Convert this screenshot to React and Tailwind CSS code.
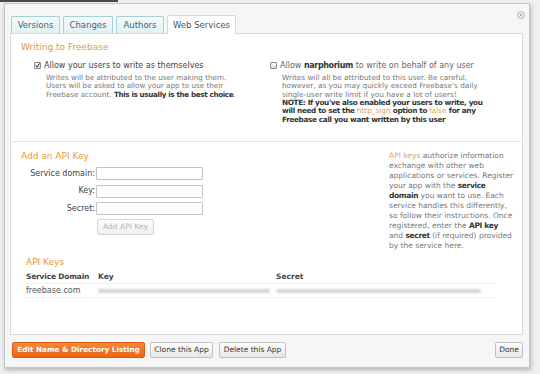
import React from 'react';

const font = { fontFamily: '"DejaVu Sans", Verdana, sans-serif' };

function Checkbox({ checked }) {
  return (
    <span className="w-[7px] h-[7px] border border-[#8a8a8a] bg-gradient-to-b from-white to-[#dcdcdc] rounded-[1px] flex items-center justify-center shrink-0">
      {checked && (
        <svg width="7" height="7" viewBox="0 0 7 7" className="-mt-[1px]">
          <path d="M1 3.5 L3 5.5 L6.5 0.5" fill="none" stroke="#222" strokeWidth="1.4" />
        </svg>
      )}
    </span>
  );
}

function Tab({ label, active, width }) {
  return (
    <div
      className={`flex items-center justify-center text-[8.5px] rounded-t-[2px] border border-b-0 ${
        active
          ? 'bg-white border-[#d6d6d6] text-[#3d5766] relative z-10 h-[19px]'
          : 'h-[18px] bg-gradient-to-b from-[#f4fafb] to-[#e2f0f3] border-[#a9cfd6] text-[#3e6676]'
      }`}
      style={{ width }}
    >
      {label}
    </div>
  );
}

function Field({ label }) {
  return (
    <div className="flex items-center h-[13px]">
      <span className="w-[75px] text-right pr-[1px] text-[8px] text-[#444]">{label}</span>
      <span className="w-[107px] h-[13px] border border-[#c4c4c4] bg-white rounded-[1px]" />
    </div>
  );
}

function Btn({ children, className = '' }) {
  return (
    <button
      className={`h-[16px] rounded-[2px] border border-[#c2c2c2] bg-gradient-to-b from-white to-[#e6e6e6] text-[#333] text-[7.5px] flex items-center justify-center ${className}`}
    >
      {children}
    </button>
  );
}

// bold runs in the small copy, kept narrow like the original
function B({ children }) {
  return <b className="text-[#333] tracking-[-0.35px]">{children}</b>;
}

function Orange({ children }) {
  return <span className="text-[#e3a060]">{children}</span>;
}

function Lines({ lines, className }) {
  return (
    <div className={className}>
      {lines.map((l, i) => (
        <div key={i} className="whitespace-nowrap">{l}</div>
      ))}
    </div>
  );
}

export default function App() {
  return (
    <div className="w-[540px] h-[374px] bg-[#eef0f0] overflow-hidden" style={font}>
      <div className="w-[118px] h-[2px] bg-[#4a4a4a]" />
      <div className="ml-[4px] mt-[1px] w-[526px] h-[365px] bg-[#f6f6f6] border border-[#c6c6c6] shadow-[1px_2px_4px_rgba(0,0,0,0.25)] relative flex flex-col pl-[5px] pr-[6px] pt-[12px]">
        {/* close icon */}
        <svg width="8" height="8" viewBox="0 0 8 8" className="absolute right-[4px] top-[7px]">
          <circle cx="4" cy="4" r="3.4" fill="none" stroke="#a8a8a8" strokeWidth="0.9" />
          <path d="M2.6 2.6 L5.4 5.4 M5.4 2.6 L2.6 5.4" stroke="#a8a8a8" strokeWidth="0.9" />
        </svg>

        {/* Tabs */}
        <div className="flex items-end gap-[3px] pl-[1px] h-[18px]">
          <Tab label="Versions" width={49} />
          <Tab label="Changes" width={50} />
          <Tab label="Authors" width={48} />
          <Tab label="Web Services" width={69} active />
        </div>

        {/* Panel */}
        <div className="-mt-[1px] w-[513px] h-[302px] bg-white border border-[#d9d9d9] flex flex-col">
          {/* Writing to Freebase */}
          <div className="h-[108px] border-b border-[#e2e2e2] mx-[1px] pl-[9px] pt-[7px]">
            <div className="text-[9px] leading-[12px] text-[#e39a3c]">Writing to Freebase</div>
            <div className="flex mt-[7px]">
              <div className="w-[249px] pl-[13px]">
                <div className="flex items-center gap-[3px] h-[11px]">
                  <Checkbox checked />
                  <span className="text-[8px] text-[#444] whitespace-nowrap">Allow your users to write as themselves</span>
                </div>
                <Lines
                  className="mt-[3px] ml-[12px] text-[7.2px] leading-[8.35px] text-[#777]"
                  lines={[
                    'Writes will be attributed to the user making them.',
                    'Users will be asked to allow your app to use their',
                    <>Freebase account. <B>This is usually is the best choice</B>.</>,
                  ]}
                />
              </div>
              <div className="flex-1">
                <div className="flex items-center gap-[3px] h-[11px]">
                  <Checkbox />
                  <span className="text-[8px] text-[#666] whitespace-nowrap">
                    Allow <B>narphorium</B> to write on behalf of any user
                  </span>
                </div>
                <Lines
                  className="mt-[3px] ml-[12px] text-[7.3px] leading-[8.35px] text-[#777]"
                  lines={[
                    'Writes will all be attributed to this user. Be careful,',
                    "however, as you may quickly exceed Freebase's daily",
                    'single-user write limit if you have a lot of users!',
                    <B>NOTE: If you've also enabled your users to write, you</B>,
                    <B>will need to set the <span className="font-normal tracking-normal text-[#e3a060]">http_sign</span> option to <span className="font-normal tracking-normal text-[#e3a060]">false</span> for any</B>,
                    <B>Freebase call you want written by this user</B>,
                  ]}
                />
              </div>
            </div>
          </div>

          {/* Add an API Key */}
          <div className="flex pl-[10px]">
            <div className="flex-1 pt-[8px]">
              <div className="text-[9px] leading-[12px] text-[#e39a3c]">Add an API Key</div>
              <div className="mt-[5px] flex flex-col gap-[4.5px]">
                <Field label="Service domain:" />
                <Field label="Key:" />
                <Field label="Secret:" />
              </div>
              <div className="mt-[4px] ml-[76px]">
                <Btn className="w-[57px] text-[#b5b5b5] border-[#d6d6d6] from-[#fafafa] to-[#eeeeee]">Add API Key</Btn>
              </div>
            </div>
            <Lines
              className="w-[132px] mr-[1px] pt-[9px] text-[7.5px] leading-[10px] text-[#777]"
              lines={[
                <><Orange>API keys</Orange> authorize information</>,
                'exchange with other web',
                'applications or services. Register',
                <>your app with the <B>service</B></>,
                <><B>domain</B> you want to use. Each</>,
                'service handles this differently,',
                'so follow their instructions. Once',
                <>registered, enter the <B>API key</B></>,
                <>and <B>secret</B> (if required) provided</>,
                'by the service here.',
              ]}
            />
          </div>

          {/* API Keys */}
          <div className="pl-[15px] mt-[5px]">
            <div className="text-[9px] leading-[12px] text-[#e39a3c]">API Keys</div>
            <div className="mt-[3px] w-[470px] text-[7.5px]">
              <div className="flex h-[13px] items-center font-bold text-[#444] border-b border-[#f0f0f0]">
                <span className="w-[72px] tracking-[-0.2px]">Service Domain</span>
                <span className="w-[178px]">Key</span>
                <span>Secret</span>
              </div>
              <div className="flex h-[14px] items-center text-[#555] border-b border-[#f0f0f0]">
                <span className="w-[72px] text-[8px]">freebase.com</span>
                <span className="w-[178px] pr-[6px]">
                  <span className="block h-[4px] rounded-full bg-[#d4d4d4] blur-[1px]" />
                </span>
                <span className="w-[205px]">
                  <span className="block h-[4px] rounded-full bg-[#d4d4d4] blur-[1px]" />
                </span>
              </div>
            </div>
          </div>
        </div>

        {/* Footer buttons */}
        <div className="mt-[7px] flex items-center gap-[5px] pl-[2px]">
          <button className="h-[16px] w-[133px] rounded-[2px] border border-[#d65f14] bg-gradient-to-b from-[#f7873a] to-[#ec6414] text-white font-bold text-[7.3px] flex items-center justify-center">
            Edit Name &amp; Directory Listing
          </button>
          <Btn className="w-[63px]">Clone this App</Btn>
          <Btn className="w-[67px] ml-[1px]">Delete this App</Btn>
          <Btn className="w-[28px] ml-auto">Done</Btn>
        </div>
      </div>
    </div>
  );
}
